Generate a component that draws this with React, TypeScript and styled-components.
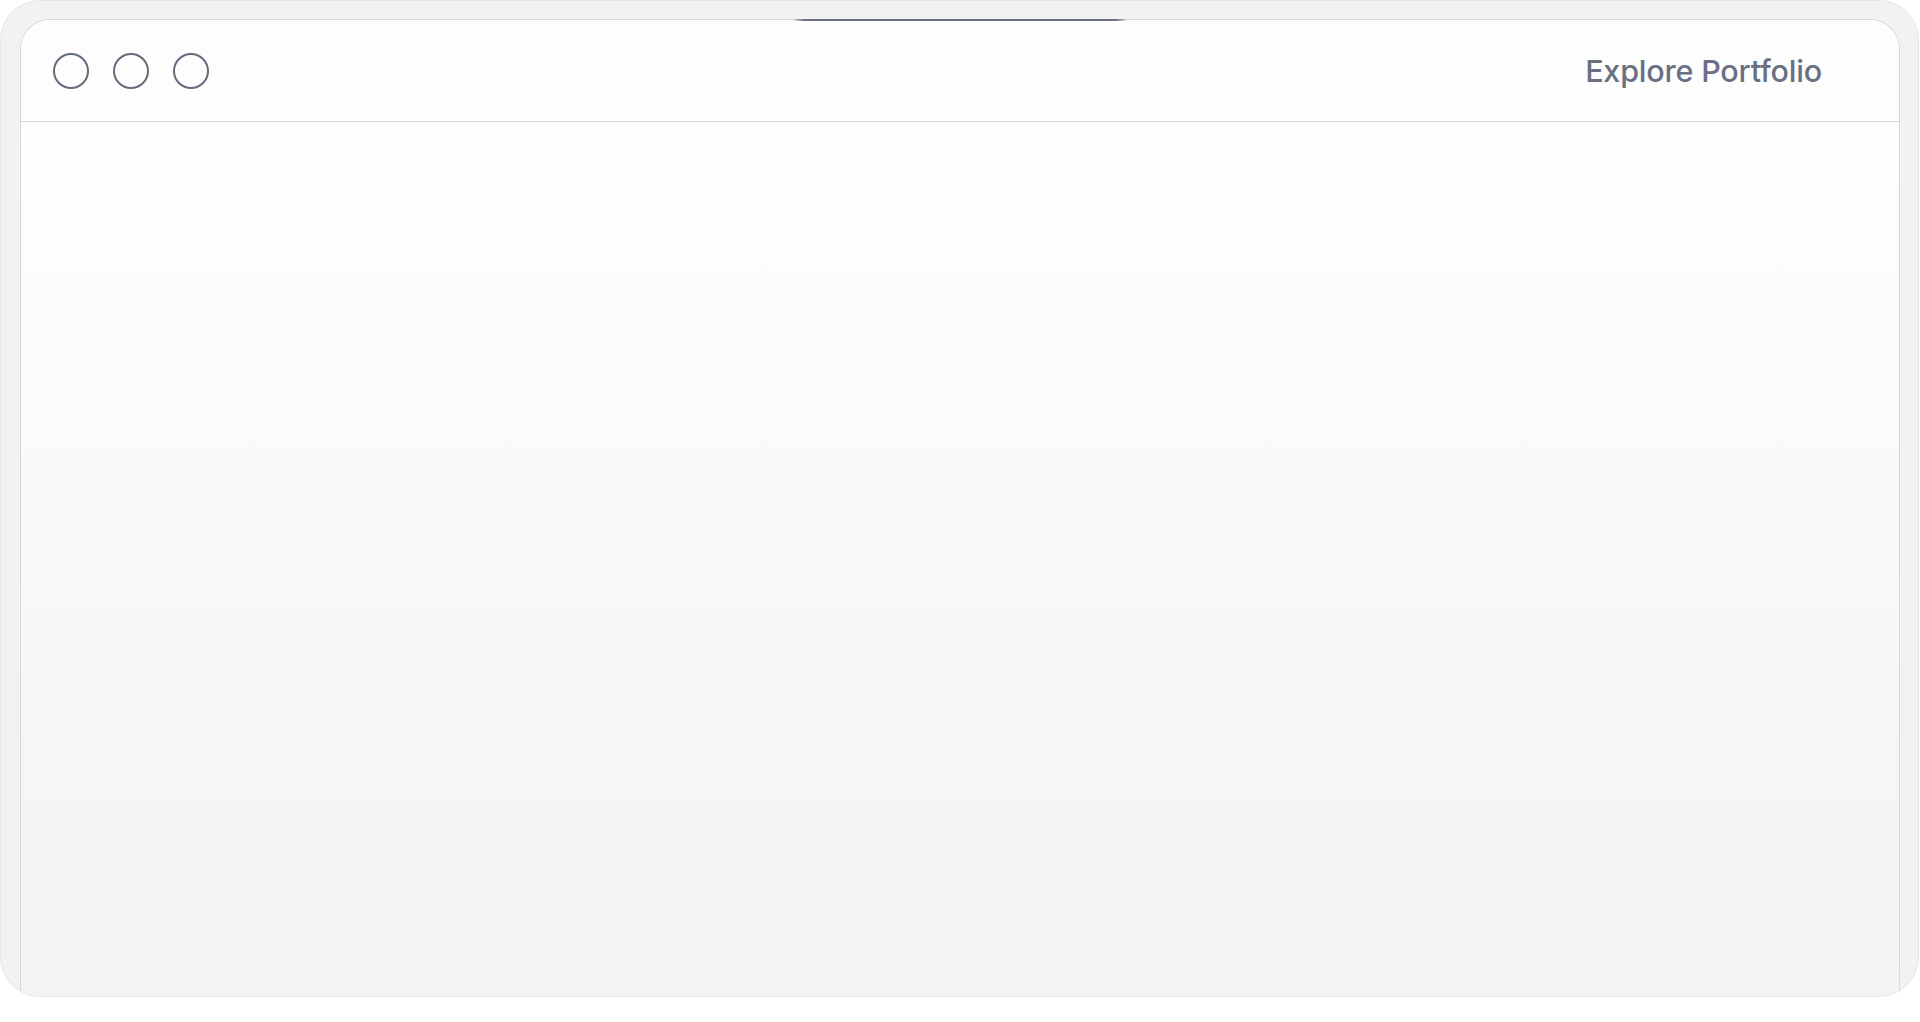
import React from "react";
import styled, { createGlobalStyle } from "styled-components";

const Global = createGlobalStyle`
  html, body { margin: 0; padding: 0; background: #ffffff; }
  body { font-family: Inter, "Noto Sans", sans-serif; }
  * { box-sizing: border-box; }
`;

const Page = styled.div`
  width: 100%;
  height: 1022px;
  background: #ffffff;
  display: flex;
  flex-direction: column;
`;

const Frame = styled.div`
  position: relative;
  width: 1919px;
  height: 997px;
  border-radius: 40px;
  border: 1px solid #e6e6e9;
  background-color: #f2f2f2;
  background-image: radial-gradient(#e8e8e8 0.6px, transparent 0.7px);
  background-size: 4px 4px;
  padding: 18px 18px 0 19px;
  overflow: hidden;
  display: flex;
`;

const TopGlow = styled.div`
  position: absolute;
  top: 18px;
  left: 50%;
  transform: translateX(-50%);
  width: 330px;
  height: 1.5px;
  background: linear-gradient(90deg, rgba(107,114,128,0.3) 0%, #6b7280 3%, #6b7280 97%, rgba(107,114,128,0.3) 100%);
  z-index: 2;
`;

const Window = styled.div`
  flex: 1;
  display: flex;
  flex-direction: column;
  border: 1px solid #d8d8dc;
  border-bottom: none;
  border-radius: 30px 30px 0 0;
  overflow: hidden;
  background: linear-gradient(180deg, #ffffff 0%, #fcfcfc 30%, #f7f7f7 65%, #f3f3f3 100%);
`;

const Header = styled.header`
  height: 102px;
  flex-shrink: 0;
  display: flex;
  align-items: center;
  justify-content: space-between;
  padding: 0 77px 0 32px;
  background: #fdfdfd;
  border-bottom: 1.5px solid #d6d6d9;
`;

const Dots = styled.div`
  display: flex;
  align-items: center;
  gap: 24px;
`;

const Dot = styled.span`
  width: 36px;
  height: 36px;
  border-radius: 50%;
  border: 2px solid #646b7b;
  display: block;
`;

const NavLink = styled.a`
  font-family: Inter, "Noto Sans", sans-serif;
  font-size: 30.5px;
  font-weight: 500;
  color: #697082;
  text-decoration: none;
  letter-spacing: -0.2px;
  cursor: pointer;
`;

const Body = styled.main`
  flex: 1;
`;

export default function App() {
  return (
    <Page>
      <Global />
      <Frame>
        <TopGlow />
        <Window>
          <Header>
            <Dots>
              <Dot />
              <Dot />
              <Dot />
            </Dots>
            <NavLink>Explore Portfolio</NavLink>
          </Header>
          <Body />
        </Window>
      </Frame>
    </Page>
  );
}
